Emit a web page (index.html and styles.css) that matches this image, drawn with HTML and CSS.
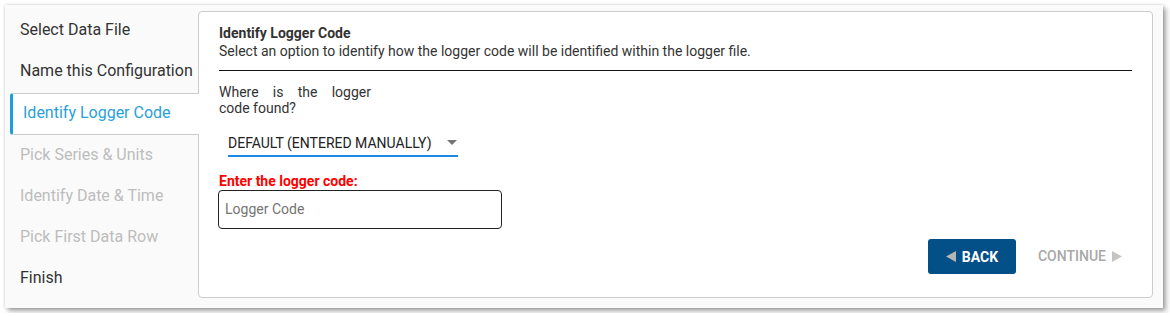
FILE: index.html
```html
<!DOCTYPE html>
<html>
<head>
<meta charset="utf-8">
<link rel="stylesheet" href="styles.css">
</head>
<body>
<div class="card">
  <nav class="steps">
    <div class="step">Select Data File</div>
    <div class="step">Name this Configuration</div>
    <div class="step active">Identify Logger Code</div>
    <div class="step disabled">Pick Series &amp; Units</div>
    <div class="step disabled">Identify Date &amp; Time</div>
    <div class="step disabled">Pick First Data Row</div>
    <div class="step">Finish</div>
  </nav>
  <section class="panel">
    <div class="title">Identify Logger Code</div>
    <div class="subtitle">Select an option to identify how the logger code will be identified within the logger file.</div>
    <div class="rule"></div>
    <div class="question">Where is the logger code found?</div>
    <div class="select">
      <span class="select-text">DEFAULT (ENTERED MANUALLY)</span>
      <svg class="caret" width="10" height="5" viewBox="0 0 10 5"><path d="M0 0H10L5 5Z" fill="#757575"/></svg>
    </div>
    <div class="label">Enter the logger code:</div>
    <div class="input"><span class="placeholder">Logger Code</span></div>
    <div class="actions">
      <button class="btn back"><svg width="10" height="11" viewBox="0 0 10 11"><path d="M10 0V11L0 5.5Z" fill="#b5b5b5"/></svg>BACK</button>
      <button class="btn continue">CONTINUE<svg width="10" height="11" viewBox="0 0 10 11"><path d="M0 0V11L10 5.5Z" fill="#c4c4c4"/></svg></button>
    </div>
  </section>
</div>
</body>
</html>
```
FILE: styles.css
```css
* { box-sizing: border-box; }
html, body { margin: 0; padding: 0; background: #ffffff; }
body { font-family: Roboto, "Liberation Sans", Arial, sans-serif; }

.card {
  margin: 5px;
  width: 1158px;
  height: 303px;
  background: #fafafa;
  display: flex;
  box-shadow: 0 0 3px rgba(0,0,0,0.18), 3px 3px 5px rgba(0,0,0,0.35);
}

.steps {
  width: 193px;
  flex: none;
  padding-top: 3px;
  display: flex;
  flex-direction: column;
}
.step {
  height: 41px;
  line-height: 43px;
  font-size: 16px;
  color: #333333;
  padding-left: 15px;
  white-space: nowrap;
}
.step.disabled { color: #bdbdbd; }
.step.active {
  position: relative;
  z-index: 2;
  margin: 3px -1px -2px 5px;
  height: 42px;
  line-height: 37px;
  padding-left: 10px;
  background: #ffffff;
  color: #2a9fd8;
  border-top: 1px solid #cccccc;
  border-bottom: 1px solid #cccccc;
  border-left: 3px solid #1a9fdc;
  border-radius: 3px 0 0 3px;
}

.panel {
  flex: 1;
  margin: 6px 10px 10px 0;
  background: #ffffff;
  border: 1px solid #cccccc;
  border-radius: 4px;
  padding: 12px 20px 0 20px;
  display: flex;
  flex-direction: column;
  color: #333333;
  font-size: 14px;
}
.title { font-weight: 700; line-height: 18px; color: #333; }
.subtitle { line-height: 18px; }
.rule { height: 1px; background: #111111; margin-top: 10px; }
.question {
  margin-top: 13px;
  width: 152px;
  line-height: 16px;
  text-align: justify;
}
.select {
  margin: 16px 0 0 9px;
  width: 230px;
  height: 25px;
  border-bottom: 2px solid #1e88e5;
  display: flex;
  align-items: center;
  justify-content: space-between;
  padding-right: 1px;
  padding-bottom: 2px;
  color: #222222;
}
.select-text { line-height: 20px; }
.caret { margin-bottom: 1px; }
.label {
  margin-top: 15px;
  color: #ff0000;
  font-weight: 700;
  line-height: 18px;
}
.input {
  margin-left: -1px;
  width: 284px;
  height: 39px;
  border: 1px solid #222222;
  border-radius: 4px;
  display: flex;
  align-items: center;
  padding-left: 6px;
  padding-bottom: 1px;
}
.placeholder { color: #757575; font-size: 14px; }
.actions {
  margin-top: 10px;
  display: flex;
  justify-content: flex-end;
  gap: 10px;
}
.btn {
  font-family: inherit;
  font-size: 14px;
  font-weight: 700;
  height: 35px;
  border: none;
  border-radius: 3px;
  display: flex;
  align-items: center;
  gap: 6px;
  padding-bottom: 1px;
  cursor: pointer;
}
.back {
  width: 88px;
  justify-content: center;
  background: #034f88;
  color: #ffffff;
}
.continue {
  background: transparent;
  color: #a8a8a8;
  padding: 0 10px 1px 12px;
  font-weight: 500;
}
```
